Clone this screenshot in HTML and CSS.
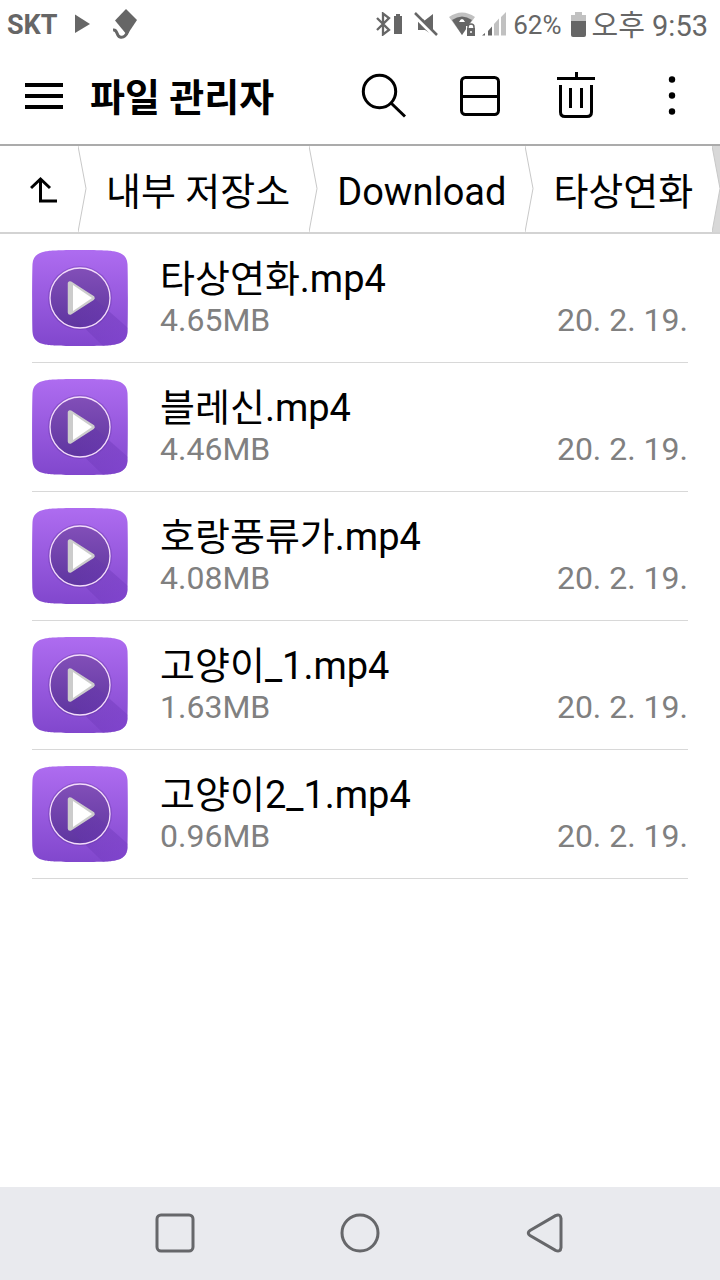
FILE: index.html
```html
<!DOCTYPE html>
<html lang="ko">
<head>
<meta charset="utf-8">
<meta name="viewport" content="width=device-width, initial-scale=1">
<title>파일 관리자</title>
<link rel="stylesheet" href="styles.css">
</head>
<body>
<svg class="defs" width="0" height="0" aria-hidden="true">
  <defs>
    <linearGradient id="tile" x1="0" y1="0" x2="0" y2="1">
      <stop offset="0" stop-color="#ae6cf0"/>
      <stop offset="1" stop-color="#8147cd"/>
    </linearGradient>
    <linearGradient id="disc" x1="0" y1="0" x2="0" y2="1">
      <stop offset="0" stop-color="#824fb8"/>
      <stop offset="1" stop-color="#5e35a0"/>
    </linearGradient>
    <linearGradient id="ray" gradientUnits="userSpaceOnUse" x1="50" y1="40" x2="90" y2="90">
      <stop offset="0" stop-color="#5b2fa0" stop-opacity="0.3"/>
      <stop offset="1" stop-color="#7a3fc8" stop-opacity="0.5"/>
    </linearGradient>
    <path id="squircle" d="M48 0C70 0 78 0.500 83 1.500C91 3 95 7 95.500 14C96 24 96 72 95.500 82C95 89 91 93 83 94.500C78 95.500 70 96 48 96C26 96 18 95.500 13 94.500C5 93 1 89 0.500 82C0 72 0 24 0.500 14C1 7 5 3 13 1.500C18 0.500 26 0 48 0Z"/>
    <clipPath id="tile-clip"><use href="#squircle"/></clipPath>
  </defs>
  <symbol id="video" viewBox="0 0 96 96">
    <use href="#squircle" fill="url(#tile)"/>
    <circle cx="48" cy="48" r="32" fill="#5b2d96" opacity="0.3"/>
    <circle cx="48" cy="48" r="30" fill="url(#disc)"/>
    <path d="M62 48L96 78V96H71L37 63Z" fill="url(#ray)" clip-path="url(#tile-clip)"/>
    <circle cx="48" cy="48" r="30" fill="none" stroke="#f3dcfa" stroke-width="1.3"/>
    <path d="M38 33.500V62.500L60.500 48Z" fill="#ccc" stroke="#ccc" stroke-width="4.500" stroke-linejoin="round"/>
    <path d="M41 35V61L60 48Z" fill="#fff"/>
  </symbol>
</svg>

<header class="status">
  <div class="status-group">
    <span class="carrier">SKT</span>
    <svg class="ico-play" viewBox="0 0 16 20" width="16" height="20"><path d="M0 0.500L15 10L0 19Z" fill="#666"/></svg>
    <svg class="ico-kite" viewBox="0 0 24 30" width="24" height="30"><path d="M13 0L24 11L14 26L2 11.500Z" fill="#666"/><path d="M0 21C5 20 3 27 7 28C11 29 13 27 15 22" fill="none" stroke="#666" stroke-width="3"/></svg>
  </div>
  <div class="status-group">
    <svg viewBox="377 12 29 24" width="29" height="24"><path d="M378 18L390 30L384 34.500V13.500L390 18L378 30" fill="none" stroke="#666" stroke-width="2.300"/><path d="M395 16H397V14H401V16H403V34H395Z" fill="#666"/></svg>
    <svg class="ico-mute" viewBox="415 11 24 25" width="24" height="25"><path d="M434 13V33L425 24V20ZM419 18H424L434 30V34L426 29H419Z" fill="#666"/><path d="M415 14L437 36" stroke="#fff" stroke-width="4"/><path d="M416 12L438 34" stroke="#666" stroke-width="2.500"/></svg>
    <svg class="ico-wifi" viewBox="449 12 28 25" width="28" height="25"><path d="M450 17Q463 8 476 17L463 35Z" fill="#c1c1c1"/><path d="M453 20Q463 13 473 20L463 35Z" fill="#666"/><path d="M460 22Q463 16 466 22Z" fill="#fff"/><path d="M467 26H478V37H467Z" fill="#fff"/><path d="M468 28H476V36H468Z" fill="#666"/><path d="M469 28V27A3 3 0 0 1 475 27V28" fill="none" stroke="#666" stroke-width="1.500"/><circle cx="472" cy="32" r="1" fill="#fff"/></svg>
    <svg class="ico-signal" viewBox="483 12 24 24" width="24" height="24"><path d="M483 35.500L486 33V35.500ZM489 31L493 26.500V35.500H489Z" fill="#666"/><path d="M495 24L500 18.500V35.500H495ZM502 17L507 12V35.500H502Z" fill="#c1c1c1"/></svg>
    <span class="percent">62%</span>
    <svg class="ico-batt" viewBox="572 11 15 25" width="15" height="25"><path d="M576 11H583V14H587V20H572V14H576Z" fill="#c1c1c1"/><path d="M572 20H587V34Q587 36 585 36H574Q572 36 572 34Z" fill="#666"/></svg>
    <span class="clock">오후 9:53</span>
  </div>
</header>

<div class="appbar">
  <button class="menu" type="button" aria-label="메뉴">
    <svg viewBox="0 0 38 28" width="38" height="28"><path d="M0 3H38M0 14H38M0 25H38" stroke="#000" stroke-width="4"/></svg>
  </button>
  <h1 class="title">파일 관리자</h1>
  <button class="tool" type="button" aria-label="검색"><svg viewBox="360 72 48 48" width="48" height="48" fill="none" stroke="#000" stroke-width="3"><circle cx="379.500" cy="91.500" r="16.200"/><path d="M391 103L405 116.500"/></svg></button>
  <button class="tool" type="button" aria-label="화면 분할"><svg viewBox="456 72 48 48" width="48" height="48" fill="none" stroke="#000" stroke-width="3"><rect x="461.500" y="77.500" width="37" height="37" rx="4"/><path d="M461 96.500H499"/></svg></button>
  <button class="tool" type="button" aria-label="삭제"><svg viewBox="552 72 48 48" width="48" height="48" fill="none" stroke="#000" stroke-width="3"><path d="M557 78.500H595M576.500 72V78M560.500 85V112Q560.500 116.500 565 116.500H587Q591.500 116.500 591.500 112V85M570.500 88V108M581.500 88V108"/></svg></button>
  <button class="tool" type="button" aria-label="더보기"><svg viewBox="648 72 48 48" width="48" height="48"><circle cx="672" cy="79.500" r="3.200"/><circle cx="672" cy="95.500" r="3.200"/><circle cx="672" cy="111.500" r="3.200"/></svg></button>
</div>

<nav class="crumbs" aria-label="경로">
  <a class="crumb up" href="#up" aria-label="상위 폴더"><svg viewBox="0 0 28 28" width="28" height="28" fill="none" stroke="#000" stroke-width="3"><path d="M1 12L10.500 3L20 12M10.500 3V25H27"/></svg></a>
  <svg class="chev" viewBox="0 0 9 87" preserveAspectRatio="none"><path class="chev-fill" d="M0 0L8 43L0 87Z"/><path class="chev-line" d="M0 0L8 43L0 87"/></svg>
  <a class="crumb" href="#storage">내부 저장소</a>
  <svg class="chev" viewBox="0 0 9 87" preserveAspectRatio="none"><path class="chev-fill" d="M0 0L8 43L0 87Z"/><path class="chev-line" d="M0 0L8 43L0 87"/></svg>
  <a class="crumb" href="#download">Download</a>
  <svg class="chev" viewBox="0 0 9 87" preserveAspectRatio="none"><path class="chev-fill" d="M0 0L8 43L0 87Z"/><path class="chev-line" d="M0 0L8 43L0 87"/></svg>
  <a class="crumb" href="#folder" aria-current="page">타상연화</a>
  <svg class="chev last" viewBox="0 0 9 87" preserveAspectRatio="none"><path class="chev-fill" d="M0 0L8 43L0 87Z"/><path class="chev-line" d="M0 0L8 43L0 87"/></svg>
</nav>

<main class="content">
  <ul class="files">
    <li class="file"><svg class="thumb"><use href="#video"/></svg><div class="info"><span class="name">타상연화.mp4</span><div class="meta"><span>4.65MB</span><span>20. 2. 19.</span></div></div></li>
    <li class="file"><svg class="thumb"><use href="#video"/></svg><div class="info"><span class="name">블레신.mp4</span><div class="meta"><span>4.46MB</span><span>20. 2. 19.</span></div></div></li>
    <li class="file"><svg class="thumb"><use href="#video"/></svg><div class="info"><span class="name">호랑풍류가.mp4</span><div class="meta"><span>4.08MB</span><span>20. 2. 19.</span></div></div></li>
    <li class="file"><svg class="thumb"><use href="#video"/></svg><div class="info"><span class="name">고양이_1.mp4</span><div class="meta"><span>1.63MB</span><span>20. 2. 19.</span></div></div></li>
    <li class="file"><svg class="thumb"><use href="#video"/></svg><div class="info"><span class="name">고양이2_1.mp4</span><div class="meta"><span>0.96MB</span><span>20. 2. 19.</span></div></div></li>
  </ul>
</main>

<footer class="navbar">
  <button class="key" type="button" aria-label="최근 앱"><svg viewBox="0 0 40 40" width="40" height="40"><rect x="2" y="2" width="36" height="36" rx="4"/></svg></button>
  <button class="key" type="button" aria-label="홈"><svg viewBox="0 0 40 40" width="40" height="40"><circle cx="20" cy="20" r="18"/></svg></button>
  <button class="key" type="button" aria-label="뒤로"><svg viewBox="0 0 40 40" width="40" height="40"><path d="M30.500 2.600L5 17.500Q1.500 20 5 22.500L30.500 37.400Q35.500 39.500 36 34.500V5.500Q35.500 0.500 30.500 2.600Z"/></svg></button>
</footer>
</body>
</html>
```
FILE: styles.css
```css
* {
  box-sizing: border-box;
}

body {
  margin: 0;
  min-height: 100vh;
  display: flex;
  flex-direction: column;
  background: #fff;
  color: #000;
  font-family: Roboto, "Noto Sans CJK KR", sans-serif;
}

svg {
  display: block;
  flex: none;
}

.defs {
  position: absolute;
}

button {
  border: 0;
  padding: 0;
  background: none;
  font: inherit;
}

.status {
  display: flex;
  justify-content: space-between;
  height: 48px;
  padding: 0 12px 0 7px;
  color: #666;
}

.status-group {
  display: flex;
  align-items: center;
}

.carrier {
  padding-top: 2px;
  font-size: 27px;
  font-weight: 700;
}

.ico-play {
  margin-left: 17px;
}

.ico-kite {
  margin-left: 22px;
}

.ico-mute {
  margin-left: 9px;
}

.ico-wifi {
  margin-left: 10px;
}

.ico-signal {
  margin-left: 6px;
}

.percent {
  margin: 0 9px 0 7px;
  padding-top: 2px;
  font-size: 26px;
}

.clock {
  margin-left: 6px;
  padding-top: 4px;
  font-size: 29px;
  line-height: 40px;
}

.appbar {
  display: flex;
  align-items: center;
  height: 98px;
  border-bottom: 2px solid #ababab;
}

.menu {
  display: flex;
  justify-content: center;
  width: 88px;
}

.title {
  flex: 1;
  margin: 0;
  padding: 4px 0 0 2px;
  font-size: 38px;
  font-weight: 700;
  line-height: 56px;
  white-space: nowrap;
}

.tool {
  display: flex;
  justify-content: center;
  width: 96px;
}

.crumbs {
  display: flex;
  height: 88px;
  border-bottom: 2px solid #d3d3d3;
  background: #d8d8d8;
  overflow: hidden;
}

.crumb {
  display: flex;
  align-items: center;
  padding: 5px 19px 0;
  background: #fff;
  color: #000;
  font-size: 38px;
  line-height: 56px;
  text-decoration: none;
  white-space: nowrap;
}

.up {
  padding: 2px 20px 0 30px;
}

.chev {
  width: 9px;
  height: 100%;
  background: #fff;
}

.chev.last {
  background: none;
}

.chev-fill {
  fill: #fff;
}

.chev-line {
  fill: none;
  stroke: #c8c8c8;
}

.content {
  flex: 1;
  padding: 0 32px;
}

.files {
  margin: 0;
  padding: 0;
  list-style: none;
}

.file {
  display: flex;
  gap: 32px;
  padding: 16px 0;
  border-bottom: 1px solid #d8d8d8;
}

.thumb {
  width: 96px;
  height: 96px;
}

.info {
  flex: 1;
  padding-top: 3px;
}

.name {
  display: block;
  font-size: 38px;
  line-height: 52px;
}

.meta {
  display: flex;
  justify-content: space-between;
  color: #808080;
  font-size: 32px;
  line-height: 30px;
}

.navbar {
  display: flex;
  justify-content: center;
  gap: 145px;
  padding: 26px 0 27px;
  background: #e9eaee;
}

.key svg {
  fill: none;
  stroke: #66676a;
  stroke-width: 3;
}
```
